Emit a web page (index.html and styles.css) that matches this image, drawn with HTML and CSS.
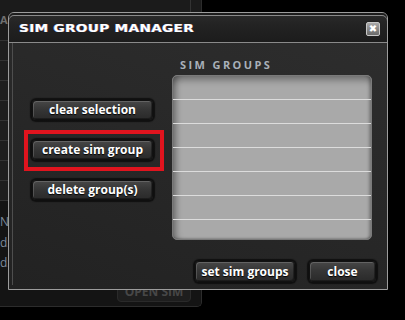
FILE: index.html
```html
<!DOCTYPE html>
<html>
<head>
<meta charset="utf-8">
<link rel="stylesheet" href="styles.css">
</head>
<body>
<div class="backdrop">
  <div class="table">
    <div class="trow head"><div class="cell">A</div><div class="cell2"></div></div>
    <div class="trow"><div class="cell"></div><div class="cell2"></div></div>
    <div class="trow"><div class="cell"></div><div class="cell2"></div></div>
    <div class="trow"><div class="cell"></div><div class="cell2"></div></div>
    <div class="trow"><div class="cell"></div><div class="cell2"></div></div>
    <div class="trow"><div class="cell"></div><div class="cell2"></div></div>
    <div class="trow"><div class="cell"></div><div class="cell2"></div></div>
    <div class="trow"><div class="cell"></div><div class="cell2"></div></div>
    <div class="trow"><div class="cell"></div><div class="cell2"></div></div>
  </div>
  <div class="info">
    <div class="info-line">No</div>
    <div class="info-line">d:</div>
    <div class="info-line">d:</div>
    <div class="open-sim">OPEN SIM</div>
  </div>
</div>

<div class="dialog">
  <div class="titlebar">
    <div class="title">SIM GROUP MANAGER</div>
    <div class="close-x">&#x2716;</div>
  </div>
  <div class="body">
    <div class="body-inner">
      <div class="actions">
        <div class="btn">clear selection</div>
        <div class="highlight-wrap">
          <div class="btn">create sim group</div>
          <div class="highlight"></div>
        </div>
        <div class="btn">delete group(s)</div>
      </div>
      <div class="groups">
        <div class="label">SIM GROUPS</div>
        <div class="list">
          <div class="row"></div>
          <div class="row"></div>
          <div class="row"></div>
          <div class="row"></div>
          <div class="row"></div>
          <div class="row"></div>
          <div class="row last"></div>
        </div>
      </div>
      <div class="footer">
        <div class="btn btn-set">set sim groups</div>
        <div class="btn btn-close">close</div>
      </div>
    </div>
  </div>
</div>
</body>
</html>
```
FILE: styles.css
```css
html, body {
  margin: 0;
  padding: 0;
}
body {
  width: 405px;
  height: 320px;
  overflow: hidden;
  background: #000;
  position: relative;
  font-family: "Open Sans", "DejaVu Sans", sans-serif;
}

/* background panel */
.backdrop {
  width: 202px;
  height: 307px;
  box-sizing: border-box;
  background: #1c1c1c;
  border-right: 1px solid #2c2c2c;
  border-bottom: 1px solid #2c2c2c;
  border-bottom-right-radius: 5px;
  display: flex;
  flex-direction: column;
  overflow: hidden;
}
.table {
  height: 201px;
  display: flex;
  flex-direction: column;
  background: #1e1e1e;
}
.trow {
  flex: 1;
  display: flex;
  border-bottom: 1px solid #333;
}
.trow.head {
  flex: 0 0 30px;
  background: #1b1b1b;
}
.cell {
  width: 190px;
  border-right: 1px solid #333;
  color: #6f6f6f;
  font-size: 11px;
  font-weight: 700;
  line-height: 40px;
  padding-left: 0;
}
.cell2 { flex: 1; }
.info {
  flex: 1;
  background: #141414;
  padding-top: 11px;
  display: flex;
  flex-direction: column;
}
.info-line {
  color: #7d8a9c;
  font-size: 12px;
  line-height: 20.5px;
  margin-left: 0;
}
.open-sim {
  margin-top: auto;
  margin-bottom: 4px;
  margin-left: 117px;
  width: 74px;
  height: 21px;
  box-sizing: border-box;
  border: 1px solid #2a2a2a;
  border-radius: 4px;
  background: #1e1e1e;
  color: #474747;
  font-size: 12px;
  font-weight: 700;
  text-align: center;
  line-height: 19px;
}

/* dialog */
.dialog {
  position: absolute;
  left: 8px;
  top: 12px;
  width: 380px;
  height: 278px;
  box-sizing: border-box;
  border: 1px solid #9c9c9c;
  border-radius: 6px 6px 0 0;
  background: linear-gradient(200deg, #2e2e2e 0%, #282828 50%, #222 100%);
  display: flex;
  flex-direction: column;
}
.titlebar {
  height: 30px;
  flex: 0 0 30px;
  box-sizing: border-box;
  border-bottom: 1px solid #8a8a8a;
  border-radius: 5px 5px 0 0;
  background: linear-gradient(#2c2c2c, #232323 40%, #1c1c1c);
  box-shadow: inset 0 2px 0 #1d1d1d, inset 0 3px 0 #8a8a8a;
  display: flex;
  align-items: center;
  padding: 2px 7px 0 10px;
}
.title {
  flex: none;
  color: #fff;
  font-family: "DejaVu Sans", sans-serif;
  font-weight: 700;
  font-size: 11px;
  letter-spacing: 0.2px;
  transform: scaleX(1.25);
  transform-origin: left center;
  text-shadow: -0.5px 0 0 rgba(120,170,255,.7), 0.5px 0 0 rgba(255,140,120,.5);
}
.close-x {
  margin-left: auto;
  width: 14px;
  height: 14px;
  box-sizing: border-box;
  border: 1px solid #c8c8c8;
  border-radius: 2px;
  background: linear-gradient(#a8a8a8, #6a6a6a);
  color: #fff;
  font-size: 10px;
  line-height: 12px;
  text-align: center;
  font-family: "DejaVu Sans", sans-serif;
  font-weight: 700;
  box-shadow: 0 0 0 1px #222;
}
.body {
  flex: 1;
  padding: 0 0 4px 3px;
  display: flex;
}
.body-inner {
  flex: 1;
  border-left: 1px solid #4e4e4e;
  display: grid;
  grid-template-columns: 121px 200px;
  grid-template-rows: auto auto;
  column-gap: 19px;
  padding: 15px 15px 0 19px;
  align-content: start;
}
.actions {
  padding-top: 42px;
  display: flex;
  flex-direction: column;
  gap: 20px;
}
.btn {
  height: 20px;
  box-sizing: border-box;
  border: 1px solid #111;
  border-radius: 4px;
  background: linear-gradient(#474747, #363636 45%, #2a2a2a);
  box-shadow: inset 1px 1px 0 rgba(255,255,255,.16), inset -1px -1px 0 rgba(0,0,0,.35), 0 0 1px 2px rgba(10,10,10,.8);
  color: #fff;
  font-weight: 700;
  font-size: 12px;
  line-height: 18px;
  text-align: center;
  white-space: nowrap;
  text-shadow: 0 1px 1px #000;
}
.highlight-wrap {
  position: relative;
}
.highlight {
  position: absolute;
  left: -8px;
  right: -11px;
  top: -10px;
  bottom: -11px;
  border: 4px solid #e0141e;
}
.groups {
  display: flex;
  flex-direction: column;
}
.label {
  color: #a9b0b9;
  font-size: 11px;
  font-weight: 700;
  letter-spacing: 2.4px;
  line-height: 14px;
  padding-left: 8px;
}
.list {
  margin-top: 3px;
  height: 165px;
  box-sizing: border-box;
  border: 1px solid #7a7a7a;
  border-radius: 5px;
  background: #a9a9a9;
  box-shadow: inset 0 8px 7px -4px rgba(0,0,0,.35), inset 8px 0 6px -5px rgba(0,0,0,.35), inset -4px 0 3px -2px rgba(0,0,0,.25), inset 0 -2px 2px -1px rgba(0,0,0,.2);
  overflow: hidden;
  padding-top: 0;
}
.row {
  height: 24px;
  box-sizing: border-box;
  border-bottom: 1px solid #dcdcdc;
}
.row.last { border-bottom: 0; }
.footer {
  grid-column: 1 / -1;
  margin-top: 21px;
  margin-right: -4px;
  display: flex;
  justify-content: flex-end;
  gap: 14px;
}
.btn-set { width: 100px; height: 21px; line-height: 19px; }
.btn-close { width: 67px; height: 21px; line-height: 19px; }
```
